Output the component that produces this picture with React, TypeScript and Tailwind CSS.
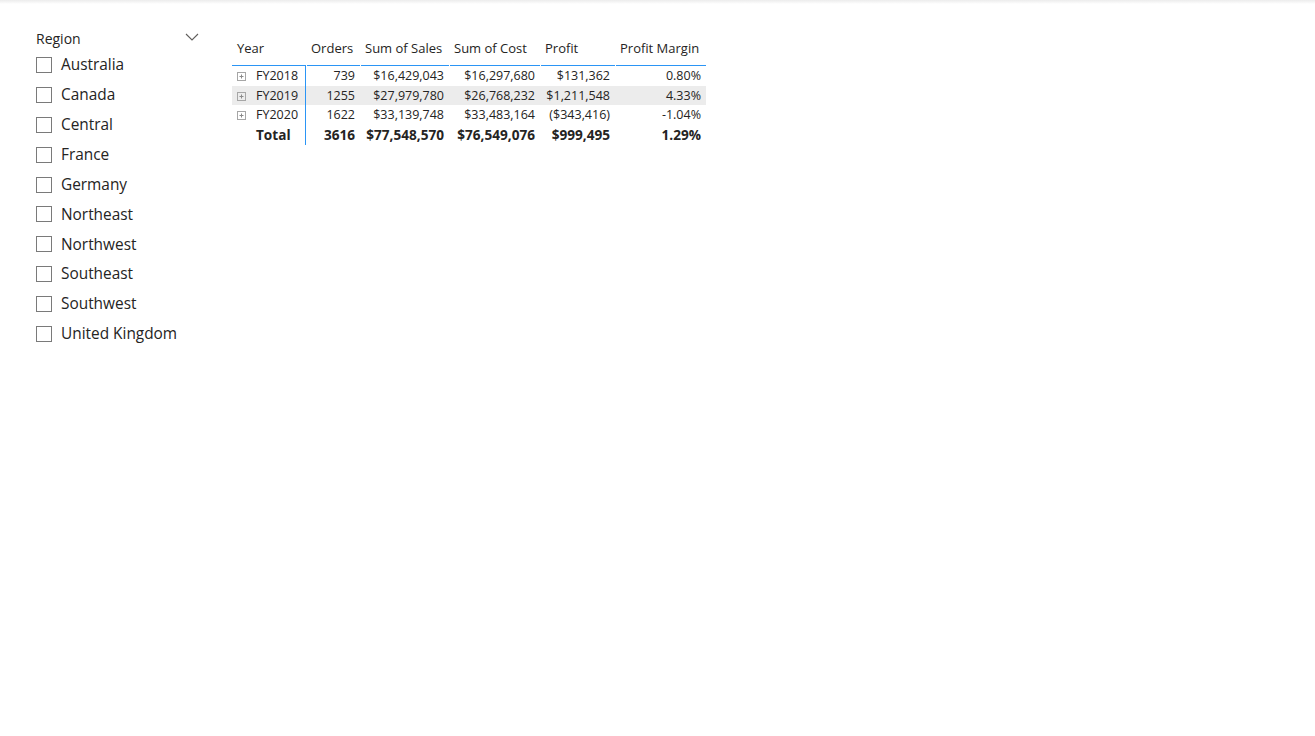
import React from "react";

const regions = [
  "Australia",
  "Canada",
  "Central",
  "France",
  "Germany",
  "Northeast",
  "Northwest",
  "Southeast",
  "Southwest",
  "United Kingdom",
];

const cols = ["Year", "Orders", "Sum of Sales", "Sum of Cost", "Profit", "Profit Margin"];
const widths = ["w-[74px]", "w-[54px]", "w-[89px]", "w-[91px]", "w-[75px]", "w-[91px]"];
const cellWidths = ["w-[73px]", "w-[54px]", "w-[89px]", "w-[91px]", "w-[75px]", "w-[91px]"];

const rows = [
  ["FY2018", "739", "$16,429,043", "$16,297,680", "$131,362", "0.80%"],
  ["FY2019", "1255", "$27,979,780", "$26,768,232", "$1,211,548", "4.33%"],
  ["FY2020", "1622", "$33,139,748", "$33,483,164", "($343,416)", "-1.04%"],
];
const total = ["Total", "3616", "$77,548,570", "$76,549,076", "$999,495", "1.29%"];

function Plus() {
  return (
    <svg width="9" height="9" viewBox="0 0 9 9" className="shrink-0">
      <rect x="0.5" y="0.5" width="8" height="8" fill="none" stroke="#a6a6a6" />
      <path d="M2.5 4.5h4M4.5 2.5v4" stroke="#8a8a8a" />
    </svg>
  );
}

function Row({ cells, bold, highlight }: { cells: string[]; bold?: boolean; highlight?: boolean }) {
  return (
    <div
      className={`flex ${bold ? "h-[20px] font-bold text-[13.6px]" : "h-[19.7px]"} ${
        highlight ? "bg-[#ececec]" : ""
      }`}
    >
      {cells.map((v, i) => (
        <React.Fragment key={i}>
          <div
            className={`${cellWidths[i]} flex items-center pt-[1px] whitespace-nowrap ${
              i === 0 ? (bold ? "pl-[24px]" : "pl-[5px] gap-[10px]") : "justify-end pr-[5px]"
            }`}
          >
            {i === 0 && !bold && <Plus />}
            {v}
          </div>
          {i === 0 && <div className="w-[1px] self-stretch bg-[#2b95f5]" />}
        </React.Fragment>
      ))}
    </div>
  );
}

export default function App() {
  return (
    <div
      className="relative w-[1315px] h-[736px] bg-white text-[#252423] overflow-hidden"
      style={{ fontFamily: '"Segoe UI", "Open Sans", "Noto Sans", sans-serif' }}
    >
      <div className="absolute top-0 left-0 right-0 h-[4px] bg-gradient-to-b from-[#ececec] to-white" />
      <div className="flex pt-[29px]">
        {/* Slicer */}
        <div className="ml-[36px] w-[164px] flex flex-col">
          <div className="flex items-center justify-between h-[20px]">
            <span className="text-[14px] leading-none">Region</span>
            <svg width="14" height="9" viewBox="0 0 14 9" className="-mt-[4px] mr-[1px]">
              <path d="M1 1l6 6 6-6" fill="none" stroke="#605e5c" strokeWidth="1.1" />
            </svg>
          </div>
          <div className="flex flex-col mt-[1px]">
            {regions.map((r) => (
              <div key={r} className="flex items-center h-[29.9px]">
                <div className="w-[16px] h-[16px] border border-[#7a7a7a] bg-white shrink-0" />
                <span className="ml-[9px] text-[15.4px] leading-none whitespace-nowrap">{r}</span>
              </div>
            ))}
          </div>
        </div>
        {/* Table */}
        <div className="ml-[32px] mt-[6px] text-[12.5px]">
          <div className="flex h-[31px] text-[13px]">
            {cols.map((c, i) => (
              <div key={c} className={`${widths[i]} flex flex-col`}>
                <div className="flex-1 pt-[4px] leading-[18px] pl-[5px] whitespace-nowrap">{c}</div>
                <div className={`h-[1px] bg-[#2b95f5] ${i > 0 ? "ml-[1px]" : ""}`} />
              </div>
            ))}
          </div>
          {rows.map((r, ri) => (
            <Row key={r[0]} cells={r} highlight={ri === 1} />
          ))}
          <Row cells={total} bold />
        </div>
      </div>
    </div>
  );
}
